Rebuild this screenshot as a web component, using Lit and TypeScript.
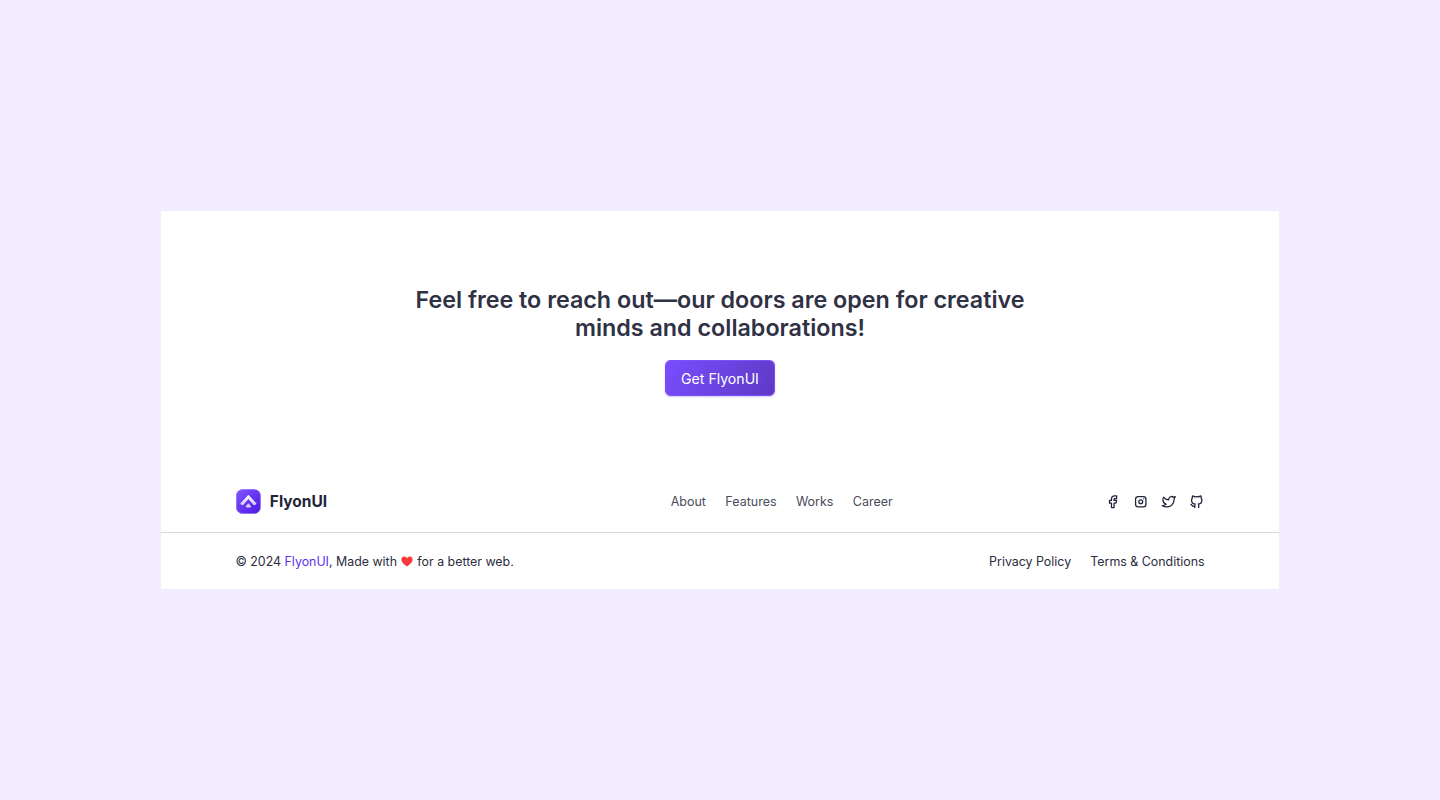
import { LitElement, html, css, svg } from "lit";
import { customElement } from "lit/decorators.js";

const socials = [
  { name: "Facebook", shape: svg`<path d="M7 10v4h3v7h4v-7h3l1 -4h-4v-2a1 1 0 0 1 1 -1h3v-4h-3a5 5 0 0 0 -5 5v2h-3"/>` },
  { name: "Instagram", shape: svg`<rect x="4" y="4" width="16" height="16" rx="4"/><circle cx="12" cy="12" r="3"/><path d="M16.5 7.5v.01"/>` },
  { name: "Twitter", shape: svg`<path d="M22 4.01c-1 .49 -1.98 .689 -3 .99c-1.121 -1.265 -2.783 -1.335 -4.38 -.737s-2.643 2.06 -2.62 3.737v1c-3.245 .083 -6.135 -1.395 -8 -4c0 0 -4.182 7.433 4 11c-1.872 1.247 -3.739 2.088 -6 2c3.308 1.803 6.913 2.423 10.034 1.517c3.58 -1.04 6.522 -3.723 7.651 -7.742a13.84 13.84 0 0 0 .497 -3.753c0 -.249 1.51 -2.772 1.818 -4.013z"/>` },
  { name: "GitHub", shape: svg`<path d="M9 19c-4.3 1.4 -4.3 -2.5 -6 -3m12 5v-3.5c0 -1 .1 -1.4 -.5 -2c2.8 -.3 5.5 -1.4 5.5 -6a4.6 4.6 0 0 0 -1.3 -3.2a4.2 4.2 0 0 0 -.1 -3.2s-1.1 -.3 -3.5 1.3a12.3 12.3 0 0 0 -6.2 0c-2.4 -1.6 -3.5 -1.3 -3.5 -1.3a4.2 4.2 0 0 0 -.1 3.2a4.6 4.6 0 0 0 -1.3 3.2c0 4.6 2.7 5.7 5.5 6c-.6 .6 -.6 1.2 -.5 2v3.5"/>` },
];

@customElement("app-root")
export class AppRoot extends LitElement {
  static styles = css`
    :host {
      display: flex;
      align-items: flex-start;
      justify-content: center;
      box-sizing: border-box;
      height: 800px;
      padding-top: 211px;
      background: #f1edff;
      font-family: Inter, sans-serif;
      color: #2f2b3d;
    }
    a { color: inherit; text-decoration: none; }
    .card { width: 1118px; height: 377.6px; background: #fff; }
    .cta {
      display: flex;
      flex-direction: column;
      align-items: center;
      box-sizing: border-box;
      height: 260px;
      padding-top: 75px;
    }
    h2 {
      margin: 0;
      width: 640px;
      font-size: 23.3px;
      line-height: 28px;
      font-weight: 600;
      text-align: center;
      color: #2f3144;
    }
    .button {
      display: flex;
      align-items: center;
      justify-content: center;
      box-sizing: border-box;
      width: 110px;
      height: 36px;
      margin-top: 18.4px;
      border: 1px solid #7c50f5;
      border-radius: 5px;
      background: linear-gradient(120deg, #794dff, #5e3ac5) padding-box;
      box-shadow: 0 1px 2px #794dff50;
      color: #fff;
      font-size: 14.1px;
    }
    .main {
      display: grid;
      grid-template-columns: 435.1px auto 1fr;
      align-items: center;
      box-sizing: border-box;
      height: 62px;
      padding: 0 75px 0 74.6px;
      border-bottom: 1px solid #d5d6d9;
    }
    .brand { display: flex; align-items: center; gap: 9.2px; font-size: 15.5px; line-height: 20px; font-weight: 700; color: #23263a; }
    .brand span { padding-top: 1px; }
    .logo { display: block; width: 25px; height: 25px; }
    .nav { display: flex; gap: 19.4px; font-size: 12.5px; color: #4b4c5b; }
    .social { display: flex; justify-content: flex-end; gap: 12.4px; color: #22243a; }
    .icon {
      display: block; width: 15.5px; height: 15.5px; fill: none; stroke: currentColor;
      stroke-width: 2; stroke-linecap: round; stroke-linejoin: round;
    }
    .bottom {
      display: flex;
      align-items: center;
      justify-content: space-between;
      height: 56px;
      padding: 0 74.5px 0 74.5px;
      font-size: 12.4px;
      color: #2b2d3e;
    }
    .accent { color: #6231ee; }
    .heart { display: inline-block; width: 12px; height: 11px; margin: 0 .7px; vertical-align: -1px; fill: #fa3b3e; }
    .legal { display: flex; gap: 19.2px; }
  `;

  render() {
    return html`
      <footer class="card">
        <section class="cta">
          <h2>Feel free to reach out—our doors are open for creative minds and collaborations!</h2>
          <a class="button" href="#">Get FlyonUI</a>
        </section>
        <div class="main">
          <div class="brand">
            <svg class="logo" viewBox="0 0 25 25">
              <defs>
                <linearGradient id="fill" x1="0" y1="0" x2="1" y2="1">
                  <stop offset="0" stop-color="#8255ff" /><stop offset="1" stop-color="#4c16e5" />
                </linearGradient>
                <linearGradient id="mark" x1="0" y1="0" x2="0" y2="1">
                  <stop offset="0" stop-color="#fff" /><stop offset="1" stop-color="#d5c8ff" />
                </linearGradient>
              </defs>
              <rect x=".4" y=".6" width="24" height="24" rx="6" fill="url(#fill)" stroke="#8b68f5" stroke-width=".8" />
              <path d="M12.4 5.8L20.5 14.5L19.2 15.9H17.6L12.4 10.1L7.2 15.9H5.6L4.3 14.5Z" fill="url(#mark)" />
              <path d="M12.4 14.2L15.1 17.2L14.3 18.6H10.5L9.7 17.2Z" fill="#d9ceff" />
            </svg>
            <span>FlyonUI</span>
          </div>
          <nav class="nav">
            ${["About", "Features", "Works", "Career"].map((t) => html`<a href="#">${t}</a>`)}
          </nav>
          <div class="social">
            ${socials.map((s) => html`<a href="#" aria-label=${s.name}><svg class="icon" viewBox="0 0 24 24">${s.shape}</svg></a>`)}
          </div>
        </div>
        <div class="bottom">
          <div>© 2024 <a class="accent" href="#">FlyonUI</a>, Made with <svg class="heart" viewBox="0 0 12 11"><path d="M6 10.6C3.5 8.8 .4 6.5 .4 3.6C.4 1.8 1.6 .6 3.2 .6C4.5 .6 5.4 1.2 6 2.3C6.6 1.2 7.5 .6 8.8 .6C10.4 .6 11.6 1.8 11.6 3.6C11.6 6.5 8.5 8.8 6 10.6Z" /></svg> for a better web.</div>
          <div class="legal"><a href="#">Privacy Policy</a><a href="#">Terms &amp; Conditions</a></div>
        </div>
      </footer>
    `;
  }
}
